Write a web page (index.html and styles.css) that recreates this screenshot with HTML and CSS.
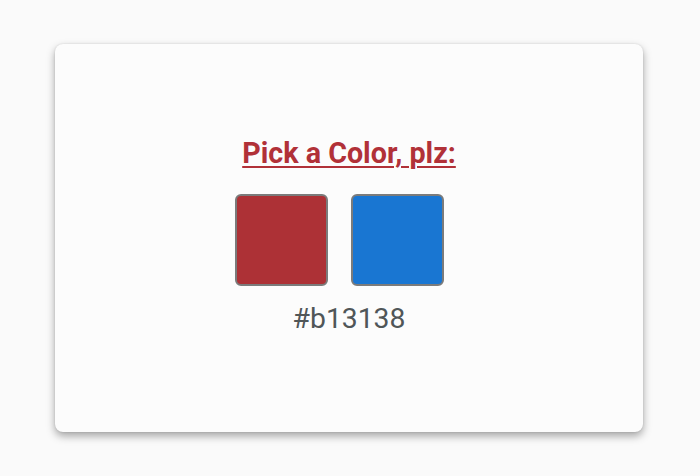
FILE: index.html
```html
<!DOCTYPE html>
<html>
<head>
<meta charset="utf-8">
<link rel="stylesheet" href="styles.css">
</head>
<body>
<main class="page">
  <section class="card">
    <h1 class="title">Pick a Color, plz:</h1>
    <div class="swatches">
      <button class="swatch swatch-red" aria-label="red"></button>
      <button class="swatch swatch-blue" aria-label="blue"></button>
    </div>
    <p class="value">#b13138</p>
  </section>
</main>
</body>
</html>
```
FILE: styles.css
```css
html, body {
  margin: 0;
  padding: 0;
  background: #fafafa;
  font-family: Roboto, "Noto Sans", sans-serif;
}
.page {
  width: 700px;
  height: 476px;
  padding: 44px 0 0 55px;
  box-sizing: border-box;
}
.card {
  width: 588px;
  height: 388px;
  box-sizing: border-box;
  background: #fcfcfc;
  border-radius: 8px;
  box-shadow: 0 4px 8px rgba(0,0,0,0.35), 0 0 2px rgba(0,0,0,0.12);
  display: flex;
  flex-direction: column;
  align-items: center;
  padding-top: 91px;
}
.title {
  margin: 0;
  font-size: 28.7px;
  font-weight: 700;
  line-height: 36px;
  color: #b13138;
  text-decoration: underline;
  text-decoration-thickness: 2px;
  text-underline-offset: 3px;
}
.swatches {
  display: flex;
  gap: 23px;
  margin-top: 23px;
  padding-right: 19px;
}
.swatch {
  width: 93px;
  height: 92px;
  border: 2px solid #7b7b7b;
  border-radius: 6px;
  padding: 0;
}
.swatch-red { background: #ad3136; }
.swatch-blue { background: #1976d2; }
.value {
  margin: 15px 0 0;
  font-size: 28.3px;
  line-height: 36px;
  color: #505658;
}
```
